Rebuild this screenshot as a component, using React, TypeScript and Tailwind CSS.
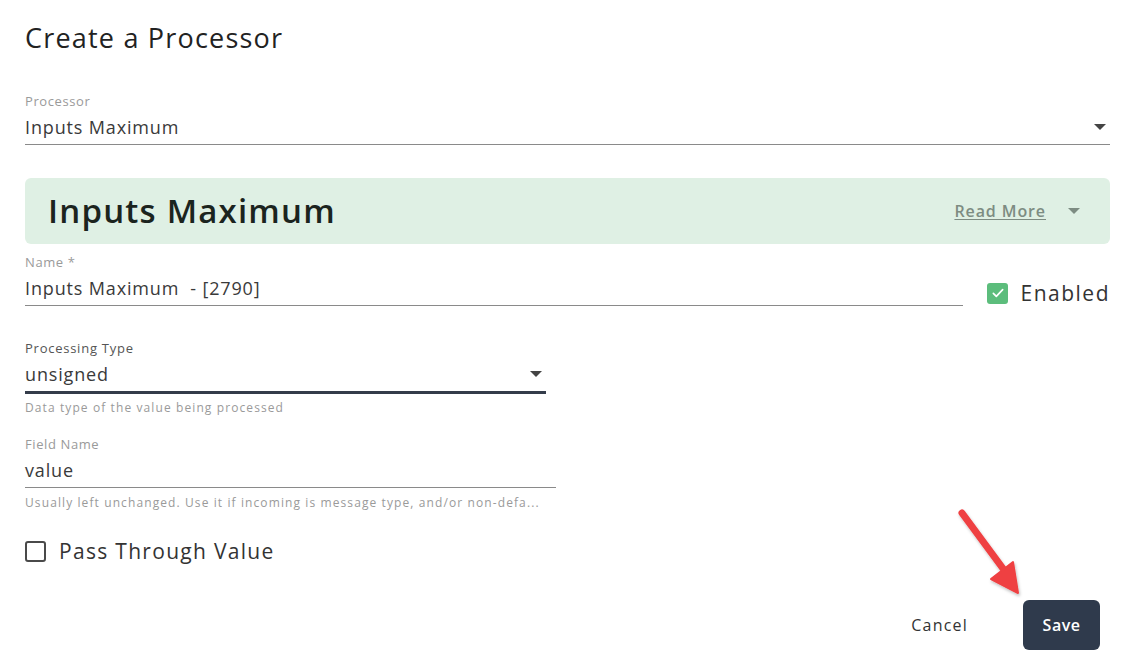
import React from "react"

const font = { fontFamily: '"Open Sans", "DejaVu Sans", sans-serif' }

function Caret({ className = "" }: { className?: string }) {
	return (
		<svg viewBox="0 0 12 6" className={`w-3 h-1.5 ${className}`}>
			<path d="M0 0h12L6 6z" fill="currentColor" />
		</svg>
	)
}

function Field({
	label,
	value,
	helper,
	thick,
	select,
	labelDark,
	className = "",
}: {
	label: string
	value: string
	helper?: string
	thick?: boolean
	select?: boolean
	labelDark?: boolean
	className?: string
}) {
	return (
		<div className={className}>
			<div
				className={`text-[13px] leading-4 ${labelDark ? "text-[#555] tracking-[0.75px]" : "text-[#9a9a9a] tracking-[0.6px]"}`}
			>
				{label}
			</div>
			<div
				className={`flex items-center justify-between pt-[6px] ${
					thick ? "border-b-[3px] border-[#343c4a] pb-[5px]" : "border-b border-[#8a8a8a] pb-[5px]"
				}`}
			>
				<span className="text-[18px] leading-6 tracking-[0.85px] text-[#3a3a3a] whitespace-pre">{value}</span>
				{select && <Caret className="text-[#444] mr-1" />}
			</div>
			{helper && (
				<div className={`text-[12px] leading-4 tracking-[1.1px] text-[#9a9a9a] whitespace-nowrap ${thick ? "mt-[6px]" : "mt-[7px]"}`}>
					{helper}
				</div>
			)}
		</div>
	)
}

export default function App() {
	return (
		<div className="relative w-[1134px] h-[667px] bg-white overflow-hidden" style={font}>
			<div className="px-[25px] pt-[20px] pr-[24px]">
				<h1 className="text-[27px] leading-9 tracking-[1.2px] text-[#222]">Create a Processor</h1>

				<Field label="Processor" value="Inputs Maximum" select className="mt-[37px]" />

				{/* info banner */}
				<div className="mt-[33px] h-[66px] rounded-md bg-[#dff0e4] flex items-center justify-between pl-[23px] pr-[30px]">
					<h2 className="text-[33px] font-semibold text-[#1b241e] tracking-[1.2px]">Inputs Maximum</h2>
					<div className="flex items-center gap-[22px]">
						<a className="text-[16px] font-semibold tracking-[0.9px] text-[#7d8c82] underline underline-offset-2">
							Read More
						</a>
						<Caret className="text-[#7d8c82]" />
					</div>
				</div>

				<div className="flex items-end mt-[10px]">
					<Field label="Name *" value="Inputs Maximum  - [2790]" className="w-[938px]" />
					<div className="flex items-center ml-auto -mb-[3px]">
						<div className="w-[21px] h-[21px] rounded-[3px] bg-[#5cbd7c] flex items-center justify-center">
							<svg viewBox="0 0 24 24" className="w-4 h-4" fill="none" stroke="white" strokeWidth={2.5} strokeLinecap="round" strokeLinejoin="round">
								<path d="M5 12.5l4.5 4.5L19 7" />
							</svg>
						</div>
						<span className="ml-[12px] text-[21px] tracking-[1.5px] text-[#333]">Enabled</span>
					</div>
				</div>

				<Field
					label="Processing Type"
					value="unsigned"
					helper="Data type of the value being processed"
					thick
					select
					labelDark
					className="w-[521px] mt-[34px]"
				/>

				<Field
					label="Field Name"
					value="value"
					helper="Usually left unchanged. Use it if incoming is message type, and/or non-defa..."
					className="w-[531px] mt-[20px]"
				/>

				<label className="flex items-center mt-[25px]">
					<span className="w-[21px] h-[21px] rounded-[3px] border-2 border-[#4a4a4a]" />
					<span className="ml-[13px] text-[21px] tracking-[1.3px] text-[#333]">Pass Through Value</span>
				</label>

				<div className="flex items-center justify-end mt-[32px] pr-[10px]">
					<button className="text-[16px] tracking-[1.2px] text-[#333] mr-[55px]">Cancel</button>
					<button className="w-[77px] h-[50px] rounded-md bg-[#2f3a4c] text-white text-[16px] font-semibold tracking-[0.5px]">
						Save
					</button>
				</div>
			</div>

			{/* annotation arrow */}
			<svg className="absolute left-[940px] top-[500px] pointer-events-none" width="110" height="110" viewBox="0 0 110 110">
				<defs>
					<filter id="sh" x="-20%" y="-20%" width="140%" height="140%">
						<feDropShadow dx="1" dy="2" stdDeviation="1.5" floodOpacity="0.25" />
					</filter>
				</defs>
				<g filter="url(#sh)" fill="#ef4042" stroke="#ef4042" strokeLinecap="round" strokeLinejoin="round">
					<path d="M22 13 L67 74" strokeWidth="7" fill="none" />
					<path d="M51 79 L73 62 L78 93 Z" strokeWidth="2" />
				</g>
			</svg>
		</div>
	)
}
